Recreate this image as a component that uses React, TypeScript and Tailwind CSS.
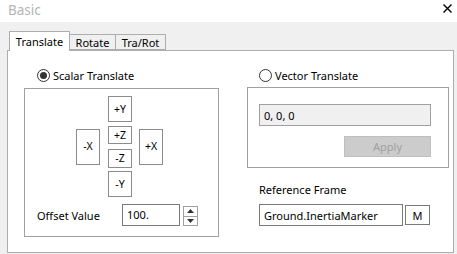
import { ReactNode } from 'react';

function Radio({ checked, label }: { checked?: boolean; label: string }) {
  return (
    <div className="flex h-[14px] items-center gap-[3px]">
      <span className="flex h-[13px] w-[13px] items-center justify-center rounded-full border border-[#333333] bg-white">
        {checked && <span className="h-[7px] w-[7px] rounded-full bg-[#333333]" />}
      </span>
      <span className="text-[#000000]">{label}</span>
    </div>
  );
}

function Btn({ children, className = '' }: { children: ReactNode; className?: string }) {
  return (
    <div
      className={`flex w-[24px] items-center justify-center border border-[#8c8c8c] bg-white text-[10.5px] ${className}`}
    >
      {children}
    </div>
  );
}

export default function App() {
  return (
    <div
      className="flex h-[254px] w-[457px] flex-col overflow-hidden bg-[#f0f0f0] text-[11px] leading-none text-black"
      style={{ fontFamily: '"Noto Sans", "Open Sans", sans-serif' }}
    >
      {/* title bar */}
      <div className="flex h-[22px] items-center justify-between bg-white pl-[8px] pr-[5px]">
        <span className="text-[13.5px] text-[#b4b4b4]">Basic</span>
        <svg width="9" height="9" viewBox="0 0 9 9" className="mb-[5px]">
          <path d="M0.5 0.5 L8.5 8.5 M8.5 0.5 L0.5 8.5" stroke="#000" strokeWidth="1.4" />
        </svg>
      </div>

      {/* tabs */}
      <div className="mt-[9px] flex items-end pl-[9px]">
        <div className="relative z-10 -mb-px flex h-[20px] w-[61px] items-start justify-center border border-b-0 border-[#adadad] bg-white pt-[4px]">
          Translate
        </div>
        <div className="flex h-[16px] w-[46px] items-center justify-center border border-l-0 border-[#adadad] bg-[#f0f0f0]">
          Rotate
        </div>
        <div className="flex h-[16px] w-[50px] items-center justify-center border border-l-0 border-[#adadad] bg-[#f0f0f0]">
          Tra/Rot
        </div>
      </div>

      {/* tab page */}
      <div className="ml-[7px] flex h-[203px] w-[447px] border border-[#adadad] bg-white pl-[16px] pt-[17px]">
        {/* scalar column */}
        <div className="flex w-[195px] flex-col">
          <div className="pl-[13px]">
            <Radio checked label="Scalar Translate" />
          </div>
          <div className="mt-[6px] flex h-[149px] flex-col border border-[#a0a0a0] pt-[7px]">
            <div className="flex items-center pl-[51px]">
              <Btn className="h-[36px]">-X</Btn>
              <div className="ml-[8px] flex flex-col">
                <Btn className="h-[26px]">+Y</Btn>
                <Btn className="mt-[4px] h-[18px]">+Z</Btn>
                <Btn className="mt-[5px] h-[19px]">-Z</Btn>
                <Btn className="mt-[3px] h-[26px]">-Y</Btn>
              </div>
              <Btn className="ml-[7px] h-[36px]">+X</Btn>
            </div>
            <div className="mt-[7px] flex items-center pl-[12px]">
              <span className="w-[85px]">Offset Value</span>
              <div className="flex h-[22px] w-[58px] items-start border border-[#7a7a7a] bg-white pl-[4px] pt-[4px]">
                100.
              </div>
              <div className="ml-[3px] mt-[2px] flex h-[20px] w-[15px] flex-col border border-[#a0a0a0] bg-white">
                <div className="flex flex-1 items-center justify-center border-b border-[#a0a0a0]">
                  <svg width="7" height="4" viewBox="0 0 7 4">
                    <path d="M0 4 L3.5 0 L7 4 Z" fill="#333" />
                  </svg>
                </div>
                <div className="flex flex-1 items-center justify-center">
                  <svg width="7" height="4" viewBox="0 0 7 4">
                    <path d="M0 0 L3.5 4 L7 0 Z" fill="#333" />
                  </svg>
                </div>
              </div>
            </div>
          </div>
        </div>

        {/* vector column */}
        <div className="ml-[28px] flex w-[202px] flex-col">
          <div className="pl-[12px]">
            <Radio label="Vector Translate" />
          </div>
          <div className="mt-[5px] flex h-[81px] flex-col items-start border border-[#a0a0a0] pl-[11px] pt-[16px]">
            <div className="flex h-[22px] w-[172px] items-center border border-[#a0a0a0] bg-[#f0f0f0] pl-[4px]">
              0, 0, 0
            </div>
            <div className="ml-[85px] mt-[10px] flex h-[21px] w-[87px] items-center justify-center border border-[#bfbfbf] bg-[#cccccc] text-[#a0a0a0]">
              Apply
            </div>
          </div>
          <div className="mt-[16px] pl-[12px]">Reference Frame</div>
          <div className="mt-[9px] flex items-start pl-[12px]">
            <div className="flex h-[22px] w-[144px] items-center border border-[#7a7a7a] bg-white pl-[4px]">
              Ground.InertiaMarker
            </div>
            <div className="ml-[2px] mt-[1px] flex h-[20px] w-[25px] items-center justify-center border border-[#7a7a7a] bg-white">
              M
            </div>
          </div>
        </div>
      </div>
    </div>
  );
}
